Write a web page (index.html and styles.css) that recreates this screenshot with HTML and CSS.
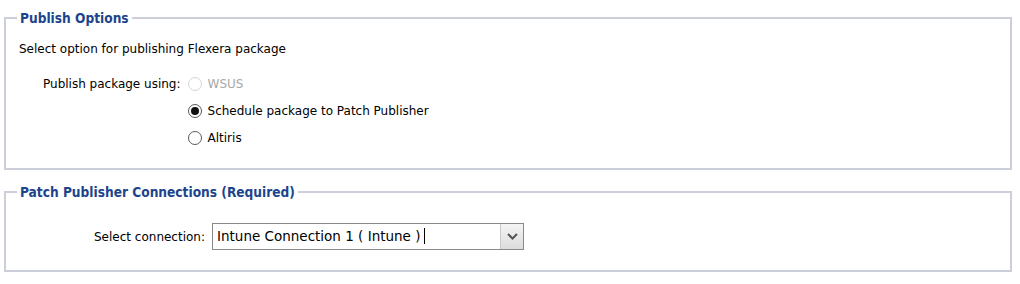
FILE: index.html
```html
<!DOCTYPE html>
<html lang="en">
<head>
    <meta charset="UTF-8">
    <title>Publish Options</title>
    <link rel="stylesheet" href="styles.css">
</head>
<body>
    <fieldset class="group">
        <legend>Publish Options</legend>
        <p class="intro">Select option for publishing Flexera package</p>
        <div class="publish-row">
            <span class="row-label">Publish package using:</span>
            <div class="options">
                <label class="option disabled"><span class="radio"></span>WSUS</label>
                <label class="option"><span class="radio checked"></span>Schedule package to Patch Publisher</label>
                <label class="option"><span class="radio"></span>Altiris</label>
            </div>
        </div>
    </fieldset>

    <fieldset class="group connections">
        <legend>Patch Publisher Connections (Required)</legend>
        <div class="connection-row">
            <span class="row-label">Select connection:</span>
            <div class="combo">
                <span class="combo-text">Intune Connection 1 ( Intune )<span class="caret"></span></span>
                <span class="combo-btn">
                    <svg width="11" height="7" viewBox="0 0 11 7"><path d="M1 1 L5.5 5.5 L10 1" fill="none" stroke="#555" stroke-width="2"/></svg>
                </span>
            </div>
        </div>
    </fieldset>
</body>
</html>
```

FILE: styles.css
```css
body {
    margin: 0;
    padding: 10px 8px 0 4px;
    font-family: "DejaVu Sans", sans-serif;
    font-size: 12px;
    color: #000;
    background-color: #fff;
}

.group {
    margin: 0 0 14px;
    padding: 0 0 0 13px;
    border: 2px solid #ccced9;
    height: 160px;
    box-sizing: border-box;
}

.group legend {
    margin-left: -2px;
    padding: 0 3px;
    color: #1c448c;
    font-family: "DejaVu Sans Condensed", "DejaVu Sans", sans-serif;
    font-weight: bold;
    font-size: 13.6px;
}

.intro {
    margin: 15px 0 0;
    line-height: 16px;
}

.publish-row {
    display: flex;
    margin-top: 19px;
    padding-left: 24px;
}

.row-label {
    margin-right: 7px;
    line-height: 16px;
}

.options {
    display: flex;
    flex-direction: column;
    gap: 11px;
}

.option {
    display: flex;
    align-items: center;
    line-height: 16px;
}

.option.disabled {
    color: #a8a8a8;
}

.radio {
    width: 14px;
    height: 14px;
    border: 1px solid #5a5a5a;
    border-radius: 50%;
    margin-right: 6px;
    box-sizing: border-box;
    display: flex;
    align-items: center;
    justify-content: center;
    background: #fff;
}

.disabled .radio {
    border-color: #d4d4d4;
}

.radio.checked::after {
    content: "";
    width: 8px;
    height: 8px;
    border-radius: 50%;
    background: #111;
}

.connections {
    height: 88px;
}

.connection-row {
    display: flex;
    align-items: center;
    margin-top: 23px;
    padding-left: 75px;
}

.connection-row .row-label {
    margin-right: 7px;
}

.combo {
    display: flex;
    width: 312px;
    height: 27px;
    border: 1px solid #8a8a8a;
    box-sizing: border-box;
}

.combo-text {
    flex: 1;
    padding-left: 4px;
    font-size: 13.5px;
    line-height: 25px;
    white-space: nowrap;
}

.caret {
    display: inline-block;
    width: 1px;
    height: 16px;
    margin-left: 4px;
    vertical-align: -3px;
    background: #000;
}

.combo-btn {
    width: 22px;
    border-left: 1px solid #c8c8c8;
    background: linear-gradient(#f4f4f4, #dcdcdc);
    display: flex;
    align-items: center;
    justify-content: center;
}
```
